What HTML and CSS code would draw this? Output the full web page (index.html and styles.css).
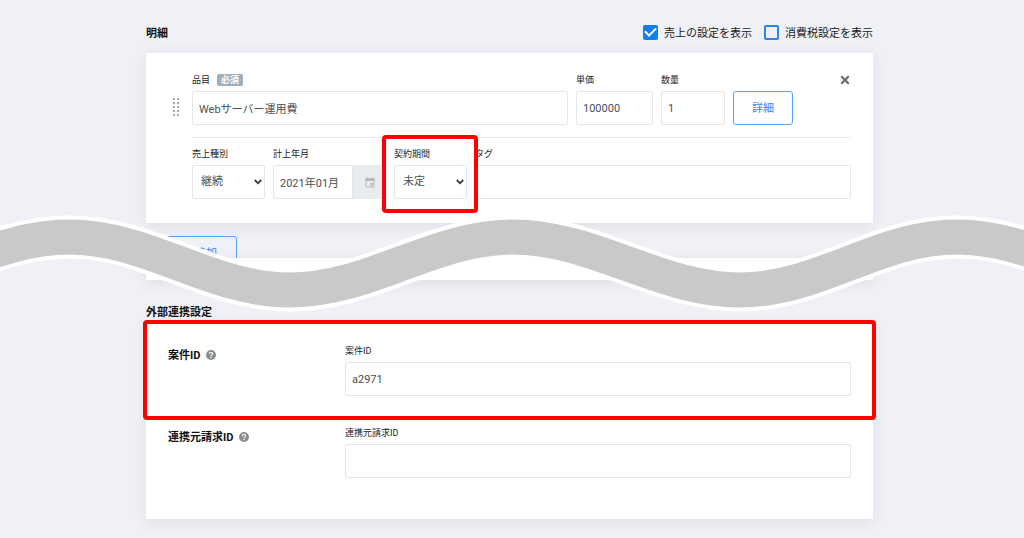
FILE: index.html
```html
<!DOCTYPE html>
<html lang="ja">
<head>
<meta charset="utf-8">
<meta name="viewport" content="width=device-width, initial-scale=1">
<title>明細</title>
<link rel="stylesheet" href="styles.css">
</head>
<body>
<main>
  <section class="wrap details">
    <header class="head">
      <h2 class="title">明細</h2>
      <div class="options">
        <label class="check"><input type="checkbox" checked>売上の設定を表示</label>
        <label class="check"><input type="checkbox">消費税設定を表示</label>
      </div>
    </header>
    <div class="card item">
      <div class="handle">
        <svg width="9" height="20" viewBox="0 0 9 20" fill="#a0a9b6" aria-hidden="true">
          <g id="dots"><rect x="1" y="1" width="2" height="2"/><rect x="5" y="1" width="2" height="2"/></g>
          <use href="#dots" y="4"/><use href="#dots" y="8"/><use href="#dots" y="12"/><use href="#dots" y="16"/>
        </svg>
      </div>
      <div class="item-body">
        <div class="row row-main">
          <div class="field grow">
            <div class="label-line"><label for="name">品目</label><span class="badge">必須</span></div>
            <input id="name" class="control" type="text" value="Webサーバー運用費">
          </div>
          <div class="field price"><label for="price">単価</label><input id="price" class="control" type="text" value="100000"></div>
          <div class="field count"><label for="count">数量</label><input id="count" class="control" type="text" value="1"></div>
          <button class="btn btn-detail" type="button">詳細</button>
          <div class="close-cell">
            <button class="close" type="button" aria-label="削除">
              <svg width="10" height="10" viewBox="0 0 10 10" aria-hidden="true"><path d="M1.3 1.3 8.7 8.7M8.7 1.3 1.3 8.7" stroke="#666" stroke-width="2.1"/></svg>
            </button>
          </div>
        </div>
        <div class="row row-sales">
          <div class="field kind"><label for="kind">売上種別</label><select id="kind" class="control"><option>継続</option></select></div>
          <div class="field month">
            <label for="month">計上年月</label>
            <div class="group">
              <input id="month" class="control" type="text" value="2021年01月">
              <button class="addon" type="button" aria-label="カレンダー">
                <svg width="10" height="11" viewBox="0 0 10 11" aria-hidden="true"><path d="M1 2h8v8H1z" fill="none" stroke="#b4b6b9"/><path d="M.5 1.5h9V4h-9zM2 .3h1V2H2zM7 .3h1V2H7zM5.3 6h2.4v2.4H5.3z" fill="#b4b6b9"/></svg>
              </button>
            </div>
          </div>
          <div class="field kind marked marked-term"><label for="term">契約期間</label><select id="term" class="control"><option>未定</option></select></div>
          <div class="field grow"><label for="tags">タグ</label><input id="tags" class="control" type="text"></div>
        </div>
      </div>
    </div>
  </section>

  <div class="tear">
    <div class="wrap">
      <div class="actions"><button class="btn btn-add" type="button">追加</button></div>
      <div class="card sliver"></div>
    </div>
    <svg class="wave" viewBox="0 0 1024 120" preserveAspectRatio="none" aria-hidden="true">
      <g fill="none">
        <path d="M-152 87C-72 87 -11 34 69 34S210 87 290 87S433 34 513 34S660 87 740 87S877 34 957 34S1098 87 1178 87" stroke="#fff" stroke-width="43"/>
        <path d="M-152 87C-72 87 -11 34 69 34S210 87 290 87S433 34 513 34S660 87 740 87S877 34 957 34S1098 87 1178 87" stroke="#c9c9c9" stroke-width="35"/>
      </g>
    </svg>
  </div>

  <section class="wrap links">
    <h2 class="title">外部連携設定</h2>
    <div class="card settings">
      <div class="setting marked marked-setting">
        <h3 class="name">案件ID <svg class="help" viewBox="0 0 10 10" aria-hidden="true"><circle cx="5" cy="5" r="5" fill="#8c8c8c"/><path d="M3.4 3.9C3.4 1.7 6.7 1.8 6.6 3.8C6.5 4.9 5 4.9 5 6.2" fill="none" stroke="#fff" stroke-width="1.1"/><rect x="4.4" y="7" width="1.2" height="1.1" fill="#fff"/></svg></h3>
        <div class="field grow"><label for="case">案件ID</label><input id="case" class="control" type="text" value="a2971"></div>
      </div>
      <div class="setting">
        <h3 class="name">連携元請求ID <svg class="help" viewBox="0 0 10 10" aria-hidden="true"><circle cx="5" cy="5" r="5" fill="#8c8c8c"/><path d="M3.4 3.9C3.4 1.7 6.7 1.8 6.6 3.8C6.5 4.9 5 4.9 5 6.2" fill="none" stroke="#fff" stroke-width="1.1"/><rect x="4.4" y="7" width="1.2" height="1.1" fill="#fff"/></svg></h3>
        <div class="field grow"><label for="source">連携元請求ID</label><input id="source" class="control" type="text"></div>
      </div>
    </div>
  </section>
</main>
</body>
</html>
```
FILE: styles.css
```css
* { box-sizing: border-box; }

body {
  margin: 0;
  background: #f0f1f6;
  color: #333;
  font-family: Roboto, "Noto Sans CJK JP", sans-serif;
  font-size: 11px;
  line-height: 20px;
}

main { overflow: hidden; padding-bottom: 19px; }

input, select, button { font: inherit; margin: 0; }

.wrap { padding: 0 151px 0 146px; }
.details { padding-top: 24px; }

.head {
  display: flex;
  justify-content: space-between;
  margin-bottom: 9px;
}

.title, .name { margin: 0; font-size: 11px; font-weight: 700; color: #111; }

.options { display: flex; gap: 12px; }
.check { display: flex; align-items: center; gap: 6px; font-size: 11px; line-height: 20px; }
.check input {
  appearance: none;
  display: grid;
  place-items: center;
  width: 15px;
  height: 15px;
  margin-bottom: 4px;
  border: 2px solid #2a86f0;
  border-radius: 2px;
}
.check input:checked { background: #0f80f2; border-color: #0f80f2; }
.check input:checked::before {
  content: "";
  width: 9px;
  height: 5px;
  border: solid #fff;
  border-width: 0 0 2px 2px;
  transform: translateY(-2px) rotate(-45deg);
}

.card { background: #fff; box-shadow: 0 3px 14px rgba(40, 45, 70, .09); }
.item { display: flex; padding: 21px 22px 24px; }
.handle { width: 24px; padding: 23px 0 0 4px; }
.item-body { flex: 1; min-width: 0; }

.row { display: flex; align-items: flex-end; gap: 8px; }
.row-main { padding-bottom: 12px; border-bottom: 1px solid #e9e9ec; }
.row-sales { padding-top: 10px; }

.field { display: flex; flex-direction: column; gap: 5px; min-width: 0; }
.grow { flex: 1; }
.price { width: 77px; }
.count { width: 64px; }
.kind { width: 73px; }
.month { width: 113px; }

label { font-size: 9px; line-height: 12px; color: #222; }
.label-line { display: flex; gap: 7px; }
.badge {
  padding: 0 4px;
  background: #a3aebb;
  border-radius: 2px;
  color: #fff;
  font-size: 9px;
  font-weight: 700;
  line-height: 12px;
}

.control {
  width: 100%;
  height: 34px;
  padding: 0 6px;
  border: 1px solid #e3e5ea;
  border-radius: 2px;
  background: #fff;
  color: #495057;
}
select.control {
  appearance: none;
  padding: 0 0 0 8px;
  background: #fff url("data:image/svg+xml,%3Csvg xmlns='http://www.w3.org/2000/svg' width='8' height='6'%3E%3Cpath d='M.8 1 4 4.3 7.2 1' fill='none' stroke='%23343a40' stroke-width='1.8'/%3E%3C/svg%3E") no-repeat right 2px center;
}

.group { display: flex; }
.group .control { flex: 1; border-radius: 2px 0 0 2px; }
.addon {
  display: grid;
  place-items: center;
  width: 33px;
  padding: 0;
  border: 0;
  background: #e9ecef;
  flex: none;
}

.btn {
  height: 34px;
  border: 1px solid #55a2f8;
  border-radius: 3px;
  background: #fff;
  color: #2d8cf5;
}
.btn-detail { width: 60px; padding: 1px 0 0; }
.close-cell { width: 50px; align-self: flex-start; text-align: right; line-height: 0; }
.close { padding: 1px 1px 0 0; border: 0; background: none; line-height: 0; }

/* Red frames that call out a field or a row */
.marked { position: relative; }
.marked::after {
  content: "";
  position: absolute;
  border: 4px solid #f00;
  border-radius: 4px;
  pointer-events: none;
}
.marked-term { z-index: 1; }
.marked-term::after { inset: -13px -11px -14px -12px; }
.marked-setting::after { inset: -3px -25px -4px; }

/* Torn middle of the page */
.tear { position: relative; }
.actions { height: 35px; padding: 13px 0 0 20px; overflow: hidden; }
.btn-add { width: 71px; padding: 1px 19px 0 0; background: none; text-align: right; }
.sliver { height: 22px; }
.wave {
  position: absolute;
  top: -20px;
  left: 0;
  width: 100%;
  height: 120px;
}

.links { padding-top: 24px; position: relative; }
.links .title { line-height: 18px; }
.settings { margin-top: 1px; padding: 0 22px 41px; }
.setting { display: flex; padding: 22px 0 20px; }
.setting + .setting { padding: 10px 0 0; border-top: 1px solid #e9e9ec; }
.name { flex: none; display: flex; align-items: center; align-self: flex-start; gap: 6px; width: 177px; padding-top: 1px; }
.help { width: 10px; height: 10px; margin-bottom: 2px; }
```
